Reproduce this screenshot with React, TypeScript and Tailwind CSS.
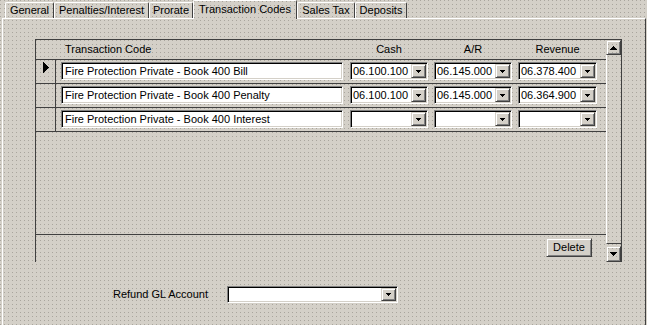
import React from "react";

const dots =
  "bg-[#d4d0c8] bg-[conic-gradient(at_1px_1px,transparent_75%,#a9a59d_0)] bg-[length:4px_4px]";
const sunken =
  "border border-t-[#808080] border-l-[#808080] border-b-white border-r-white shadow-[inset_1px_1px_0_#000,inset_-1px_-1px_0_#d4d0c8]";
const raised =
  "border border-t-[#d4d0c8] border-l-[#d4d0c8] border-b-[#404040] border-r-[#404040] shadow-[inset_1px_1px_0_#fff,inset_-1px_-1px_0_#808080] bg-[#d4d0c8]";

const tabs = [
  { label: "General", w: "w-[49px]" },
  { label: "Penalties/Interest", w: "w-[95px]" },
  { label: "Prorate", w: "w-[44px]" },
  { label: "Transaction Codes", w: "w-[104px]", active: true },
  { label: "Sales Tax", w: "w-[58px]" },
  { label: "Deposits", w: "w-[52px]" },
];

const rows = [
  { code: "Fire Protection Private - Book 400 Bill", cash: "06.100.100", ar: "06.145.000", rev: "06.378.400", current: true },
  { code: "Fire Protection Private - Book 400 Penalty", cash: "06.100.100", ar: "06.145.000", rev: "06.364.900" },
  { code: "Fire Protection Private - Book 400 Interest", cash: "", ar: "", rev: "" },
];

// pixel triangles, drawn crisp
function Arrow({ up }: { up?: boolean }) {
  return (
    <svg width="7" height="4" viewBox="0 0 7 4" shapeRendering="crispEdges" className={up ? "rotate-180" : ""}>
      <rect x="0" y="0" width="7" height="1" fill="#000" />
      <rect x="1" y="1" width="5" height="1" fill="#000" />
      <rect x="2" y="2" width="3" height="1" fill="#000" />
      <rect x="3" y="3" width="1" height="1" fill="#000" />
    </svg>
  );
}

function SmallArrow() {
  return (
    <svg width="5" height="3" viewBox="0 0 5 3" shapeRendering="crispEdges">
      <rect x="0" y="0" width="5" height="1" fill="#000" />
      <rect x="1" y="1" width="3" height="1" fill="#000" />
      <rect x="2" y="2" width="1" height="1" fill="#000" />
    </svg>
  );
}

function Combo({ value, w }: { value: string; w: string }) {
  return (
    <div className={`${w} h-[18px] flex items-center bg-white ${sunken}`}>
      <span className="flex-1 pl-[2px] leading-[14px]">{value}</span>
      <div className={`w-[15px] h-[14px] mr-[1px] flex items-center justify-center ${raised}`}>
        <SmallArrow />
      </div>
    </div>
  );
}

export default function App() {
  return (
    <div
      className={`w-[647px] h-[325px] overflow-hidden text-[11px] text-black ${dots}`}
      style={{ fontFamily: '"Liberation Sans", Arial, sans-serif' }}
    >
      {/* Tabs */}
      <div className="flex items-end h-[18px] pl-[5px]">
        {tabs.map((t) =>
          t.active ? (
            <div
              key={t.label}
              className={`${t.w} h-[19px] -mb-[1px] relative z-10 flex justify-center pt-[2px] leading-[13px] border-t border-l border-white border-r border-r-[#404040] rounded-t-[2px] ${dots}`}
            >
              {t.label}
            </div>
          ) : (
            <div
              key={t.label}
              className={`${t.w} h-[16px] flex items-center justify-center leading-[13px] border-t border-l border-white border-r border-r-[#404040] rounded-t-[2px]`}
            >
              {t.label}
            </div>
          )
        )}
      </div>

      {/* Panel */}
      <div className="h-[307px] mr-[1px] ml-[2px] border-t border-l border-white border-r border-r-[#404040]">
        {/* Grid */}
        <div className="ml-[32px] mt-[20px] w-[587px] h-[223px] flex border-t border-l border-[#404040]">
          <div className="w-[570px] flex flex-col">
            <div className="h-[20px] flex items-center border-b border-[#404040]">
              <div className="w-[29px]" />
              <div className="w-[285px]">Transaction Code</div>
              <div className="w-[78px] text-center">Cash</div>
              <div className="w-[6px]" />
              <div className="w-[78px] text-center">A/R</div>
              <div className="w-[6px]" />
              <div className="w-[79px] text-center">Revenue</div>
            </div>
            {rows.map((r) => (
              <div key={r.code} className="h-[24px] flex border-b border-[#404040]">
                <div className="w-[20px] border-r border-[#404040] flex items-start justify-center pt-[2px]">
                  {r.current && (
                    <svg width="6" height="11" viewBox="0 0 6 11" shapeRendering="crispEdges">
                      <path d="M0 0L6 5.5L0 11z" fill="#000" />
                    </svg>
                  )}
                </div>
                <div className="flex pl-[5px] pt-[2px]">
                  <div className={`w-[282px] h-[18px] bg-white flex items-center pl-[3px] leading-[14px] ${sunken}`}>
                    {r.code}
                  </div>
                  <div className="ml-[7px]">
                    <Combo value={r.cash} w="w-[78px]" />
                  </div>
                  <div className="ml-[6px]">
                    <Combo value={r.ar} w="w-[78px]" />
                  </div>
                  <div className="ml-[6px]">
                    <Combo value={r.rev} w="w-[79px]" />
                  </div>
                </div>
              </div>
            ))}
            <div className="flex-1" />
            <div className="h-[28px] border-t border-[#404040] flex justify-end pt-[3px] pr-[14px]">
              <button className={`w-[46px] h-[19px] flex items-center justify-center leading-[13px] ${raised}`}>
                Delete
              </button>
            </div>
          </div>
          {/* Scrollbar */}
          <div className="w-[16px] flex flex-col border-r border-[#404040]">
            <div className={`h-[15px] flex items-center justify-center ${raised} bg-transparent`}>
              <Arrow up />
            </div>
            <div className="flex-1 border-l border-white border-b border-b-[#404040]" />
            <div className={`h-[16px] mt-[2px] flex items-center justify-center ${raised} bg-transparent`}>
              <Arrow />
            </div>
          </div>
        </div>

        {/* Refund GL Account */}
        <div className="flex items-center mt-[24px]">
          <div className="w-[205px] text-right">Refund GL Account</div>
          <div className="ml-[19px]">
            <div className={`w-[171px] h-[17px] flex items-center bg-white ${sunken}`}>
              <span className="flex-1" />
              <div className={`w-[15px] h-[13px] mr-[1px] flex items-center justify-center ${raised}`}>
                <SmallArrow />
              </div>
            </div>
          </div>
        </div>
      </div>
    </div>
  );
}
